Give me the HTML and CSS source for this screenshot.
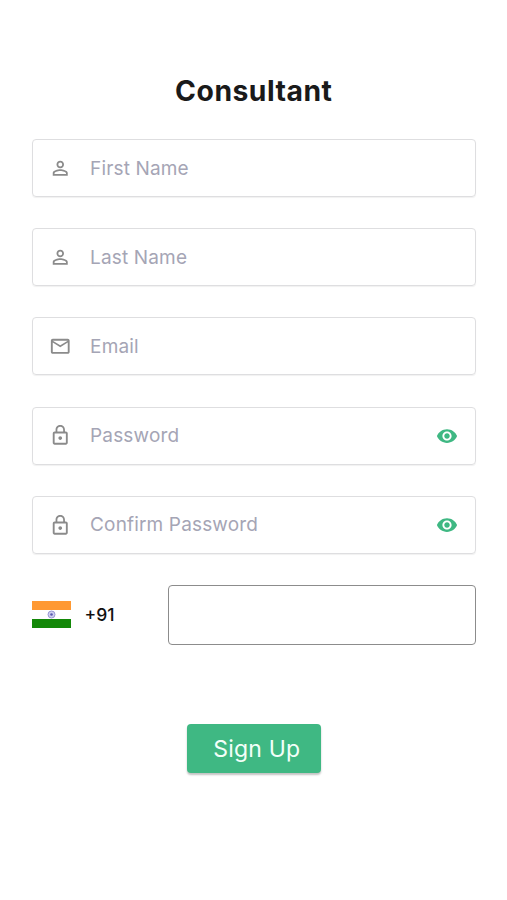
FILE: index.html
```html
<!DOCTYPE html>
<html lang="en">
<head>
<meta charset="utf-8">
<title>Consultant</title>
<link rel="stylesheet" href="styles.css">
</head>
<body>
<svg width="0" height="0" class="defs">
  <symbol id="person" viewBox="0 0 24 24"><path d="M12 5.900a2.100 2.100 0 1 1 0 4.200 2.100 2.100 0 0 1 0-4.200m0 9c2.970 0 6.100 1.460 6.100 2.100v1.100H5.900V17c0-.64 3.130-2.100 6.100-2.100M12 4C9.790 4 8 5.790 8 8s1.790 4 4 4 4-1.790 4-4-1.790-4-4-4zm0 9c-2.670 0-8 1.340-8 4v3h16v-3c0-2.660-5.330-4-8-4z"/></symbol>
  <symbol id="lock" viewBox="0 0 24 24"><path d="M12 17c1.100 0 2-.9 2-2s-.9-2-2-2-2 .9-2 2 .9 2 2 2zm6-9h-1V6c0-2.760-2.240-5-5-5S7 3.240 7 6v2H6c-1.100 0-2 .9-2 2v10c0 1.100.9 2 2 2h12c1.100 0 2-.9 2-2V10c0-1.100-.9-2-2-2zM8.900 6c0-1.710 1.390-3.100 3.100-3.100s3.100 1.390 3.100 3.100v2H8.900V6zM18 20H6V10h12v10z"/></symbol>
  <symbol id="eye" viewBox="0 0 24 24"><path d="M12 4.500C7 4.500 2.730 7.610 1 12c1.730 4.390 6 7.500 11 7.500s9.270-3.110 11-7.500c-1.730-4.390-6-7.500-11-7.500zM12 17c-2.760 0-5-2.240-5-5s2.240-5 5-5 5 2.240 5 5-2.240 5-5 5zm0-8c-1.660 0-3 1.340-3 3s1.340 3 3 3 3-1.340 3-3-1.340-3-3-3z"/></symbol>
</svg>
<main class="screen">
  <h1 class="title">Consultant</h1>
  <form class="form">
    <div class="field"><svg class="icon"><use href="#person"/></svg><span class="hint">First Name</span></div>
    <div class="field"><svg class="icon"><use href="#person"/></svg><span class="hint">Last Name</span></div>
    <div class="field"><svg class="icon" viewBox="0 0 24 24"><path d="M22 6c0-1.100-.9-2-2-2H4c-1.100 0-2 .9-2 2v12c0 1.100.9 2 2 2h16c1.100 0 2-.9 2-2V6zm-2 0-8 5-8-5h16zm0 12H4V8l8 5 8-5v10z"/></svg><span class="hint">Email</span></div>
    <div class="field"><svg class="icon"><use href="#lock"/></svg><span class="hint">Password</span><svg class="icon eye"><use href="#eye"/></svg></div>
    <div class="field"><svg class="icon"><use href="#lock"/></svg><span class="hint">Confirm Password</span><svg class="icon eye"><use href="#eye"/></svg></div>
    <div class="phone">
      <svg class="flag" viewBox="0 0 39 27">
        <rect width="39" height="9" fill="#ff9933"/>
        <rect y="9" width="39" height="9" fill="#fff"/>
        <rect y="18" width="39" height="9" fill="#138808"/>
        <circle cx="19.500" cy="13.500" r="3.500" fill="#cfcfee" stroke="#9090d0" stroke-width=".9"/>
        <circle cx="19.500" cy="13.500" r="1.300" fill="#5858b0"/>
      </svg>
      <span class="code">+91</span>
      <div class="number"></div>
    </div>
    <button type="button" class="submit">Sign Up</button>
  </form>
</main>
</body>
</html>
```
FILE: styles.css
```css
* { box-sizing: border-box; }

body {
  margin: 0;
  background: #fff;
  font-family: Inter, "Liberation Sans", sans-serif;
}

.defs { position: absolute; }

.screen {
  height: 900px;
  padding: 73px 31px 0 31.6px;
}

.title {
  margin: 0 0 30px;
  font-size: 28.3px;
  line-height: 36px;
  font-weight: 650;
  letter-spacing: 0.5px;
  text-align: center;
  color: #1a1a1a;
}

.form {
  display: flex;
  flex-direction: column;
  gap: 31.2px;
}

.field {
  display: flex;
  align-items: center;
  height: 58px;
  padding: 0 17px 0 16.8px;
  border: 1px solid #dedee0;
  border-radius: 4px;
  box-shadow: 0 1px 1px rgba(0, 0, 0, 0.06);
}

.icon {
  width: 22.5px;
  height: 22.5px;
  flex: none;
  fill: #8b8b8b;
}

.hint {
  flex: 1;
  margin-left: 18.2px;
  padding-top: 1.3px;
  font-size: 19px;
  line-height: 24px;
  letter-spacing: 0.15px;
  color: #a5a5b5;
}

.eye {
  width: 22px;
  height: 22px;
  fill: #3fb883;
}

.phone {
  display: flex;
  align-items: center;
  height: 60px;
}

.flag {
  width: 39px;
  height: 27px;
  flex: none;
}

.code {
  width: 83.4px;
  margin-left: 14px;
  font-size: 17.5px;
  font-weight: 500;
  color: #111;
}

.number {
  flex: 1;
  height: 60px;
  border: 1px solid #8c8c8c;
  border-radius: 4px;
}

.submit {
  align-self: center;
  width: 134px;
  height: 49px;
  margin-top: 48px;
  padding: 1px 0 0 6px;
  border: 0;
  border-radius: 4px;
  background: #3fb883;
  box-shadow: 0 2px 2px rgba(0, 0, 0, 0.24);
  color: #f3fff9;
  font: 400 23px/48px Inter, "Liberation Sans", sans-serif;
  letter-spacing: 0.2px;
}
```
